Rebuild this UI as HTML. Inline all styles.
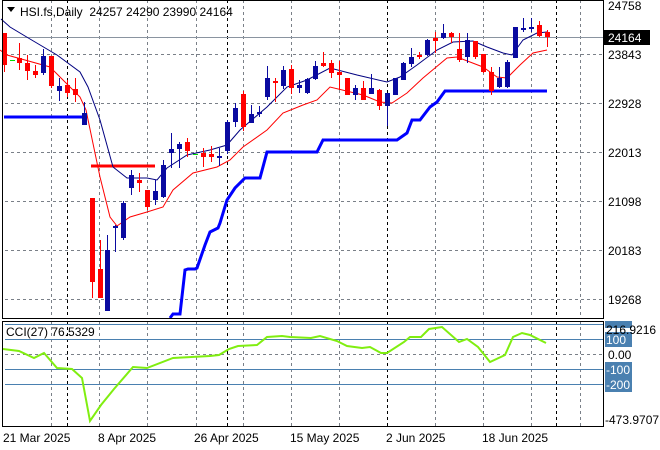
<!DOCTYPE html>
<html><head><meta charset="utf-8"><style>
html,body{margin:0;padding:0;background:#fff;width:660px;height:450px;overflow:hidden}
svg{display:block;font-family:"Liberation Sans",sans-serif;font-size:12px}
text{white-space:pre}
</style></head><body>
<svg width="660" height="450" viewBox="0 0 660 450" xmlns="http://www.w3.org/2000/svg">
<rect width="660" height="450" fill="#fff"/>
<g stroke="#7a8088" stroke-width="1" stroke-dasharray="3,3" fill="none">
<path d="M5 54.5H603M5 103.5H603M5 152.5H603M5 201.5H603M5 250.5H603M5 299.5H603M5 354.5H603"/>
<path d="M51.5 0V318M99.5 0V318M147.5 0V318M196.5 0V318M243.5 0V318M291.5 0V318M339.5 0V318M435.5 0V318M483.5 0V318M531.5 0V318M580.5 0V318"/>
<path d="M51.5 321V426M99.5 321V426M147.5 321V426M196.5 321V426M243.5 321V426M291.5 321V426M339.5 321V426M435.5 321V426M483.5 321V426M531.5 321V426M580.5 321V426"/>
</g>
<g stroke="#000" stroke-width="1" stroke-dasharray="3,3">
<path d="M67.5 0V318M227.5 0V318M387.5 0V318M556.5 0V318M67.5 321V426M227.5 321V426M387.5 321V426M556.5 321V426"/>
</g>
<path d="M5 37.5H603" stroke="#8a94a0" stroke-width="1"/>
<path d="M4 117H83" stroke="#0000ff" stroke-width="3" fill="none"/>
<path d="M91 166H155" stroke="#ff0000" stroke-width="3" fill="none"/>
<path d="M170 318L173 314L180 314L185 270L188 269L195 269L197 268L205 245L210 232L218 228L220 223L227 200L235 188L245 178L260 178L267 152L317 152L323 140L397 140L407 133L412 120L420 120L430 107L437 102L445 91L547 91" stroke="#0000ff" stroke-width="3" fill="none"/>
<path d="M1 19L10 27L30 39L57 55L80 72L88 87L100 120L113 167L127 178L147 178L157 180L167 168L187 155L210 150L227 145L240 130L267 107L287 87L307 80L330 68L357 75L387 82L400 77L417 65L437 50L453 42L473 41L487 47L503 53L512 55L523 40L537 33L547 32" stroke="#000080" stroke-width="1" fill="none"/>
<path d="M0 50L7 55L50 67L80 97L86 110L100 177L110 217L117 226L130 217L147 212L163 207L173 190L193 173L217 167L230 160L243 147L267 130L283 113L303 105L317 100L330 87L363 95L380 102L392 103L407 93L423 78L447 58L457 57L483 67L497 77L507 78L520 65L533 53L547 50" stroke="#ff0000" stroke-width="1" fill="none"/>
<g stroke="#ff0000" stroke-width="1" fill="#ff0000">
<path d="M4.5 33V72M19.5 43V70M27.5 55V80M35.5 65V78M51.5 56V88M67.5 80V97M75.5 78V102M92.5 198V298M100.5 240V298M139.5 173V192M147.5 190V210M187.5 138V157M203.5 148V167M211.5 146V162M243.5 91V131M275.5 78V102M291.5 65V94M323.5 52V67M331.5 60V78M339.5 61V90M347.5 78V95M363.5 81V100M379.5 89V110M419.5 52V59M435.5 32V53M451.5 32V43M459.5 33V62M475.5 41V59M483.5 54V73M491.5 67V95M539.5 21V37M547.5 30V47"/>
<g stroke="none">
<rect x="2" y="33" width="5" height="32"/><rect x="17" y="58" width="5" height="5"/><rect x="25" y="63" width="5" height="8"/><rect x="33" y="71" width="5" height="4"/><rect x="49" y="56" width="5" height="30"/><rect x="65" y="85" width="5" height="8"/><rect x="73" y="89" width="5" height="6"/><rect x="90" y="198" width="5" height="84"/><rect x="98" y="269" width="5" height="29"/><rect x="137" y="180" width="5" height="3"/><rect x="145" y="190" width="5" height="17"/><rect x="185" y="142" width="5" height="9"/><rect x="201" y="153" width="5" height="4"/><rect x="209" y="154" width="5" height="3"/><rect x="241" y="94" width="5" height="33"/><rect x="273" y="81" width="5" height="2"/><rect x="289" y="69" width="5" height="19"/><rect x="321" y="63" width="5" height="3"/><rect x="329" y="63" width="5" height="10"/><rect x="337" y="72" width="5" height="3"/><rect x="345" y="78" width="5" height="17"/><rect x="361" y="88" width="5" height="12"/><rect x="377" y="90" width="5" height="16"/><rect x="417" y="55" width="5" height="2"/><rect x="433" y="38" width="5" height="3"/><rect x="449" y="33" width="5" height="4"/><rect x="457" y="49" width="5" height="11"/><rect x="473" y="41" width="5" height="16"/><rect x="481" y="54" width="5" height="18"/><rect x="489" y="72" width="5" height="19"/><rect x="537" y="25" width="5" height="11"/><rect x="545" y="32" width="5" height="5"/>
</g></g>
<g stroke="#0a0aa0" stroke-width="1" fill="#0a0aa0">
<path d="M43.5 49V75M59.5 78V101M84.5 102V125M107.5 235V311M115.5 225V252M123.5 201V240M131.5 170V195M155.5 180V205M163.5 160V198M171.5 133V168M179.5 142V168M219.5 148V166M227.5 120V154M235.5 103V127M251.5 105V123M259.5 106V117M267.5 66V100M283.5 66V89M299.5 80V93M307.5 78V94M315.5 61V80M355.5 85V100M371.5 74V94M387.5 93V126M395.5 78V95M403.5 62V80M411.5 48V67M427.5 39V56M443.5 24V39M467.5 33V63M499.5 67V88M507.5 60V88M515.5 27V58M523.5 18V32M531.5 18V32"/>
<g stroke="none">
<rect x="41" y="56" width="5" height="17"/><rect x="57" y="86" width="5" height="5"/><rect x="82" y="113" width="5" height="12"/><rect x="105" y="250" width="5" height="61"/><rect x="113" y="226" width="5" height="2"/><rect x="121" y="203" width="5" height="35"/><rect x="129" y="175" width="5" height="13"/><rect x="153" y="191" width="5" height="9"/><rect x="161" y="165" width="5" height="32"/><rect x="169" y="149" width="5" height="4"/><rect x="177" y="144" width="5" height="5"/><rect x="217" y="156" width="5" height="2"/><rect x="225" y="122" width="5" height="29"/><rect x="233" y="108" width="5" height="14"/><rect x="249" y="114" width="5" height="9"/><rect x="257" y="112" width="5" height="2"/><rect x="265" y="78" width="5" height="19"/><rect x="281" y="70" width="5" height="16"/><rect x="297" y="85" width="5" height="3"/><rect x="305" y="79" width="5" height="14"/><rect x="313" y="66" width="5" height="13"/><rect x="353" y="88" width="5" height="7"/><rect x="369" y="88" width="5" height="6"/><rect x="385" y="93" width="5" height="13"/><rect x="393" y="78" width="5" height="17"/><rect x="401" y="63" width="5" height="17"/><rect x="409" y="57" width="5" height="7"/><rect x="425" y="40" width="5" height="15"/><rect x="441" y="33" width="5" height="5"/><rect x="465" y="40" width="5" height="17"/><rect x="497" y="78" width="5" height="9"/><rect x="505" y="62" width="5" height="25"/><rect x="513" y="27" width="5" height="31"/><rect x="521" y="28" width="5" height="2"/><rect x="529" y="27" width="5" height="2"/>
</g></g>
<path d="M10 60.5H15M193 154.5H198" stroke="#00dd00" stroke-width="1"/>
<g stroke="#4a80b0" stroke-width="1">
<path d="M5 324.5H603M5 339.5H603M5 369.5H603M5 384.5H603"/>
</g>
<path d="M3 349L19 351L34 358L44 353L57 368L72 369L82 378L90 421L101 405L114 389L133 367L147 368L173 358L210 356L219 355L229 349L238 346L257 345L267 337L282 336L290 337L311 338L320 336L337 341L347 346L362 348L370 347L381 353L387 353L404 342L410 337L421 337L429 329L442 327L459 342L467 339L478 347L490 362L505 355L513 337L522 333L530 335L546 343" stroke="#80ee10" stroke-width="2" fill="none"/>
<rect x="2.5" y="0.5" width="601" height="318" fill="none" stroke="#000"/>
<rect x="2.5" y="321.5" width="601" height="105" fill="none" stroke="#000"/>
<path d="M7 7H15L11 12Z" fill="#000"/>
<text x="20" y="16" fill="#000" xml:space="preserve">HSI.fs,Daily  24257 24290 23990 24164</text>
<text x="6" y="336" fill="#000">CCI(27) 76.5329</text>
<g fill="#000">
<text x="608" y="10">24758</text>
<text x="608" y="59">23843</text>
<text x="608" y="108">22928</text>
<text x="608" y="157">22013</text>
<text x="608" y="206">21098</text>
<text x="608" y="255">20183</text>
<text x="608" y="304">19268</text>
</g>
<rect x="604" y="30" width="46" height="15" fill="#000"/>
<text x="608" y="42" fill="#fff">24164</text>
<g fill="#4a80b0">
<rect x="605" y="321" width="27" height="7"/>
<rect x="605" y="332" width="27" height="15"/>
<rect x="605" y="362" width="27" height="15"/>
<rect x="605" y="377" width="27" height="15"/>
</g>
<g fill="#fff">
<text x="606" y="344">100</text>
<text x="606" y="374">-100</text>
<text x="606" y="389">-200</text>
</g>
<g fill="#000">
<text x="606" y="334">216.9216</text>
<text x="608" y="359">0.00</text>
<text x="605" y="424">-473.9707</text>
</g>
<g fill="#000">
<text x="3" y="442">21 Mar 2025</text>
<text x="98" y="442">8 Apr 2025</text>
<text x="194" y="442">26 Apr 2025</text>
<text x="290" y="442">15 May 2025</text>
<text x="386" y="442">2 Jun 2025</text>
<text x="482" y="442">18 Jun 2025</text>
</g>
</svg>
</body></html>
